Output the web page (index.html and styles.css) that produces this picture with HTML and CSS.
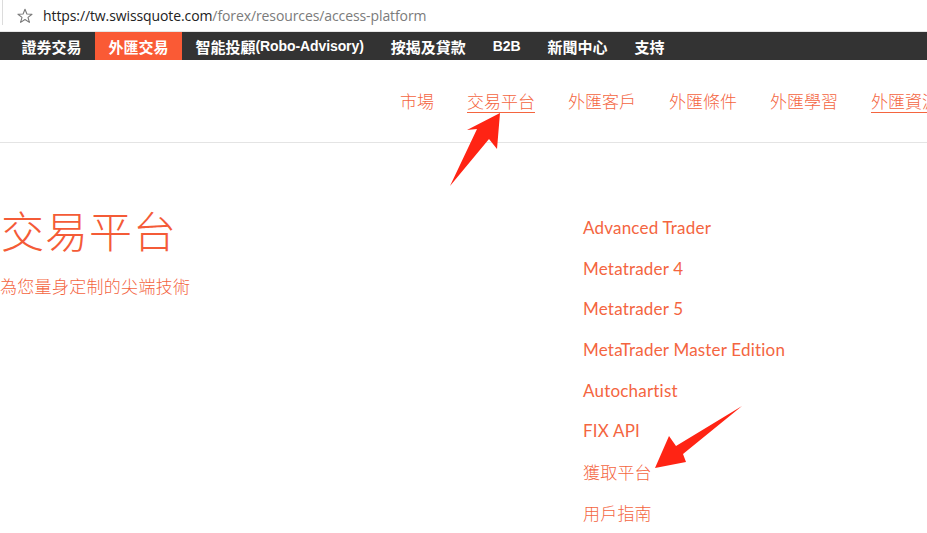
FILE: index.html
```html
<!DOCTYPE html>
<html lang="zh-Hant">
<head>
<meta charset="utf-8">
<title>交易平台</title>
<link rel="stylesheet" href="styles.css">
</head>
<body>
<div class="urlbar">
  <span class="edge"></span>
  <svg class="star" width="16" height="16" viewBox="0 0 16 16"><path d="M8 1.2 L9.9 6 L15 6.2 L11 9.4 L12.4 14.4 L8 11.5 L3.6 14.4 L5 9.4 L1 6.2 L6.1 6 Z" fill="none" stroke="#7a7a7a" stroke-width="1.1" stroke-linejoin="round"/></svg>
  <span class="url"><span class="host">https://tw.swissquote.com</span>/forex/resources/access-platform</span>
</div>
<nav class="topnav">
  <a class="tn">證券交易</a>
  <a class="tn active">外匯交易</a>
  <a class="tn">智能投顧<span class="lat">(Robo-Advisory)</span></a>
  <a class="tn">按揭及貸款</a>
  <a class="tn"><span class="lat">B2B</span></a>
  <a class="tn">新聞中心</a>
  <a class="tn">支持</a>
</nav>
<nav class="subnav">
  <a class="sn">市場</a>
  <a class="sn current">交易平台</a>
  <a class="sn">外匯客戶</a>
  <a class="sn">外匯條件</a>
  <a class="sn">外匯學習</a>
  <a class="sn current">外匯資源</a>
</nav>
<main class="main">
  <section class="intro">
    <h1 class="title">交易平台</h1>
    <p class="lead">為您量身定制的尖端技術</p>
  </section>
  <ul class="links">
    <li>Advanced Trader</li>
    <li>Metatrader 4</li>
    <li>Metatrader 5</li>
    <li>MetaTrader Master Edition</li>
    <li>Autochartist</li>
    <li>FIX API</li>
    <li class="cjk">獲取平台</li>
    <li class="cjk">用戶指南</li>
  </ul>
</main>
<svg class="arrows" width="927" height="533" viewBox="0 0 927 533">
  <polygon points="500,113 497,149 489,139 450,186 477,129 467,130" fill="#ff2414"/>
  <polygon points="655,468 669,436 676,446 742,406 683,454 686,462" fill="#ff2414"/>
</svg>
</body>
</html>
```
FILE: styles.css
```css
html, body {
  margin: 0;
  padding: 0;
  background: #fff;
  overflow: hidden;
}
body {
  width: 927px;
  height: 533px;
  position: relative;
  font-family: "Noto Sans CJK TC", "Noto Sans", sans-serif;
}
.urlbar {
  height: 31px;
  border-bottom: 1px solid #e6e6e6;
  display: flex;
  align-items: center;
}
.edge {
  width: 1px;
  height: 25px;
  background: #dcdcdc;
  align-self: flex-start;
  margin-left: 2px;
}
.star {
  margin-left: 14px;
  margin-right: 10px;
}
.url {
  font-family: "Open Sans", "Noto Sans", sans-serif;
  font-size: 14px;
  color: #7b7b7b;
  letter-spacing: -0.1px;
}
.host { color: #222; }
.topnav {
  height: 28px;
  background: #333333;
  display: flex;
  align-items: stretch;
  padding-left: 8px;
}
.tn {
  display: flex;
  align-items: center;
  padding: 0 13.5px;
  color: #fff;
  font-size: 15px;
  font-weight: 700;
  font-family: "Liberation Sans", "Noto Sans CJK TC", sans-serif;
  white-space: nowrap;
}
.tn .lat {
  font-size: 14px;
  letter-spacing: -0.1px;
}
.tn.active { background: #fa5a35; }
.subnav {
  height: 81px;
  padding-bottom: 1px;
  border-bottom: 1px solid #e4e4e4;
  display: flex;
  align-items: center;
  gap: 33px;
  padding-left: 400px;
  white-space: nowrap;
  overflow: hidden;
}
.sn {
  color: #f4653f;
  font-size: 17px;
  font-family: "Noto Sans CJK TC", sans-serif;
  font-weight: 300;
  flex: none;
}
.sn.current {
  text-decoration: underline;
  text-underline-offset: 4px;
  text-decoration-thickness: 1px;
}
.main {
  display: grid;
  grid-template-columns: 583px 1fr;
  padding-top: 60px;
}
.intro { padding-left: 1px; }
.title {
  margin: 0;
  font-size: 43px;
  font-weight: 300;
  line-height: 52px;
  color: #f45b37;
  letter-spacing: 1px;
}
.lead {
  margin: 20px 0 0 -1px;
  font-size: 17px;
  font-weight: 300;
  line-height: 22px;
  color: #f4653f;
  letter-spacing: 0.3px;
}
.links {
  list-style: none;
  margin: 0;
  padding: 14px 0 0;
  display: flex;
  flex-direction: column;
}
.links li {
  font-family: "Lato", "Noto Sans", sans-serif;
  font-size: 17px;
  line-height: 22px;
  height: 40.7px;
  color: #f4653f;
  letter-spacing: 0.2px;
}
.links li.cjk {
  font-family: "Noto Sans CJK TC", sans-serif;
  font-weight: 300;
  font-size: 17px;
}
.arrows {
  position: absolute;
  left: 0;
  top: 0;
  pointer-events: none;
}
```
